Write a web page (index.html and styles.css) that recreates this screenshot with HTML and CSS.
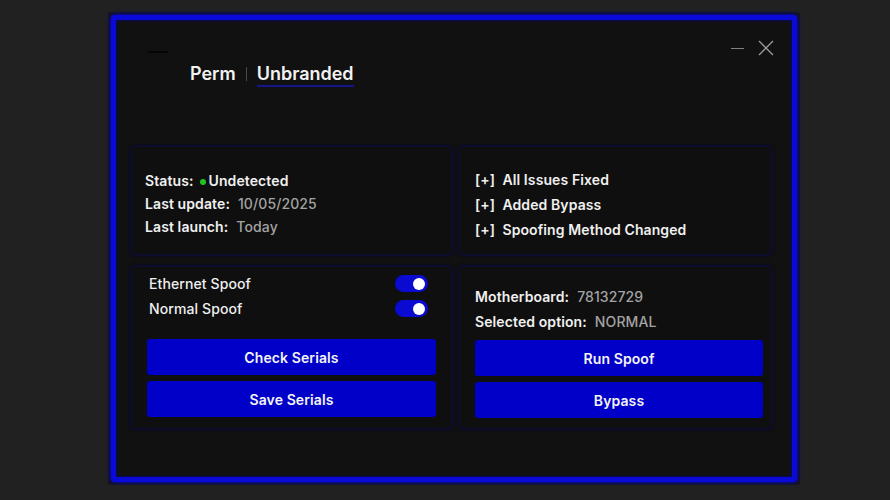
FILE: index.html
```html
<!DOCTYPE html>
<html lang="en">
<head>
<meta charset="UTF-8" />
<meta name="viewport" content="width=device-width, initial-scale=1.0"/>
<title>Perm | Unbranded</title>
<link rel="stylesheet" href="styles.css">
</head>
<body>

<div class="frame">
  <div class="window">

    <div class="header">
      <div class="brand">
        <div class="dash"></div>
        <div class="tabs">
          <span class="tab">Perm</span>
          <span class="sep"></span>
          <span class="tab active">Unbranded</span>
        </div>
      </div>
      <div class="controls">
        <span class="minimize"></span>
        <svg class="close" width="16" height="16" viewBox="0 0 16 16">
          <path d="M1 1 L15 15 M15 1 L1 15" stroke="#9a9a9a" stroke-width="1.3" fill="none"/>
        </svg>
      </div>
    </div>

    <div class="grid">
      <div class="card info">
        <p><span class="label">Status:</span><span class="dot"></span><span class="label">Undetected</span></p>
        <p><span class="label">Last update:</span><span class="value">10/05/2025</span></p>
        <p><span class="label">Last launch:</span><span class="value">Today</span></p>
      </div>

      <div class="card changelog">
        <p>[+]&nbsp; All Issues Fixed</p>
        <p>[+]&nbsp; Added Bypass</p>
        <p>[+]&nbsp; Spoofing Method Changed</p>
      </div>

      <div class="card options">
        <div class="toggle-row">
          <span>Ethernet Spoof</span>
          <span class="toggle"><span class="knob"></span></span>
        </div>
        <div class="toggle-row">
          <span>Normal Spoof</span>
          <span class="toggle"><span class="knob"></span></span>
        </div>
        <button class="btn first">Check Serials</button>
        <button class="btn">Save Serials</button>
      </div>

      <div class="card actions">
        <p><span class="label">Motherboard:</span><span class="value">78132729</span></p>
        <p><span class="label">Selected option:</span><span class="value">NORMAL</span></p>
        <button class="btn first">Run Spoof</button>
        <button class="btn">Bypass</button>
      </div>
    </div>

  </div>
</div>

</body>
</html>
```

FILE: styles.css
```css
* {
  box-sizing: border-box;
}

body {
  margin: 0;
  background: #212121;
  font-family: Inter, "Noto Sans", sans-serif;
  color: #f0f0f0;
}

.frame {
  margin: 12px 0 0 108px;
  width: 692px;
  height: 473px;
  padding: 3px;
  background: #141414;
  border-radius: 3px;
}

.window {
  height: 100%;
  border: 5px solid #0a0ad8;
  border-radius: 4px;
  background: #111111;
  box-shadow: 0 0 5px #0000ff, inset 0 0 3px #0000a0;
  padding: 0 18px 0 14px;
}

/* header */
.header {
  display: flex;
  justify-content: space-between;
  height: 125px;
}

.brand {
  padding-top: 31px;
}

.dash {
  width: 20px;
  height: 2px;
  margin-left: 18px;
  background: #050505;
}

.tabs {
  display: flex;
  align-items: flex-start;
  margin: 10px 0 0 60px;
}

.tab {
  font-size: 18px;
  line-height: 21px;
  font-weight: 600;
  color: #f2f2f2;
  padding-bottom: 1px;
  border-bottom: 2px solid transparent;
}

.tab.active {
  border-bottom-color: #14148c;
}

.sep {
  width: 1px;
  height: 14px;
  margin: 4px 10px 0 10px;
  background: #4a4a4a;
}

.controls {
  display: flex;
  align-items: center;
  gap: 14px;
  height: 16px;
  margin-top: 20px;
}

.minimize {
  width: 13px;
  height: 1px;
  background: #808080;
}

.close {
  display: block;
}

/* cards */
.grid {
  display: grid;
  grid-template-columns: 323px 315px;
  grid-template-rows: 111px 165px;
  gap: 9px 5px;
}

.card {
  border: 2px solid #0d0d2e;
  border-radius: 6px;
  background: #0f0f0f;
  box-shadow: 0 0 3px #08082c;
  font-size: 14px;
  font-weight: 600;
  letter-spacing: 0.1px;
}

.card p {
  margin: 0;
}

.info {
  padding: 22px 13px 0 13px;
}

.info p {
  line-height: 23px;
}

.label {
  color: #f0f0f0;
}

.value {
  margin-left: 8px;
  color: #a3a3a3;
  font-weight: 500;
}

.dot {
  display: inline-block;
  width: 6px;
  height: 6px;
  margin: 0 3px 1px 6px;
  border-radius: 50%;
  background: #22c422;
  vertical-align: middle;
}

.changelog {
  padding: 20px 15px 0 15px;
}

.changelog p {
  line-height: 25px;
}

.options {
  padding: 4px 15px 0 15px;
}

.toggle-row {
  display: flex;
  justify-content: space-between;
  align-items: center;
  height: 25px;
  padding: 0 8px 0 2px;
  font-weight: 500;
}

.toggle {
  display: flex;
  justify-content: flex-end;
  align-items: center;
  width: 33px;
  height: 17px;
  padding-right: 3px;
  border-radius: 9px;
  background: #0a0ad0;
}

.knob {
  width: 12px;
  height: 12px;
  border-radius: 50%;
  background: #ffffff;
}

.actions {
  padding: 17px 8px 0 15px;
}

.actions p {
  line-height: 25px;
}

.btn {
  display: block;
  width: 100%;
  height: 36px;
  margin-top: 6px;
  border: none;
  border-radius: 3px;
  background: #0000c8;
  color: #f4f4f4;
  font-family: inherit;
  font-size: 14px;
  font-weight: 600;
  letter-spacing: 0.1px;
}

.options .btn.first {
  margin-top: 18px;
}

.actions .btn.first {
  margin-top: 6px;
}
```
